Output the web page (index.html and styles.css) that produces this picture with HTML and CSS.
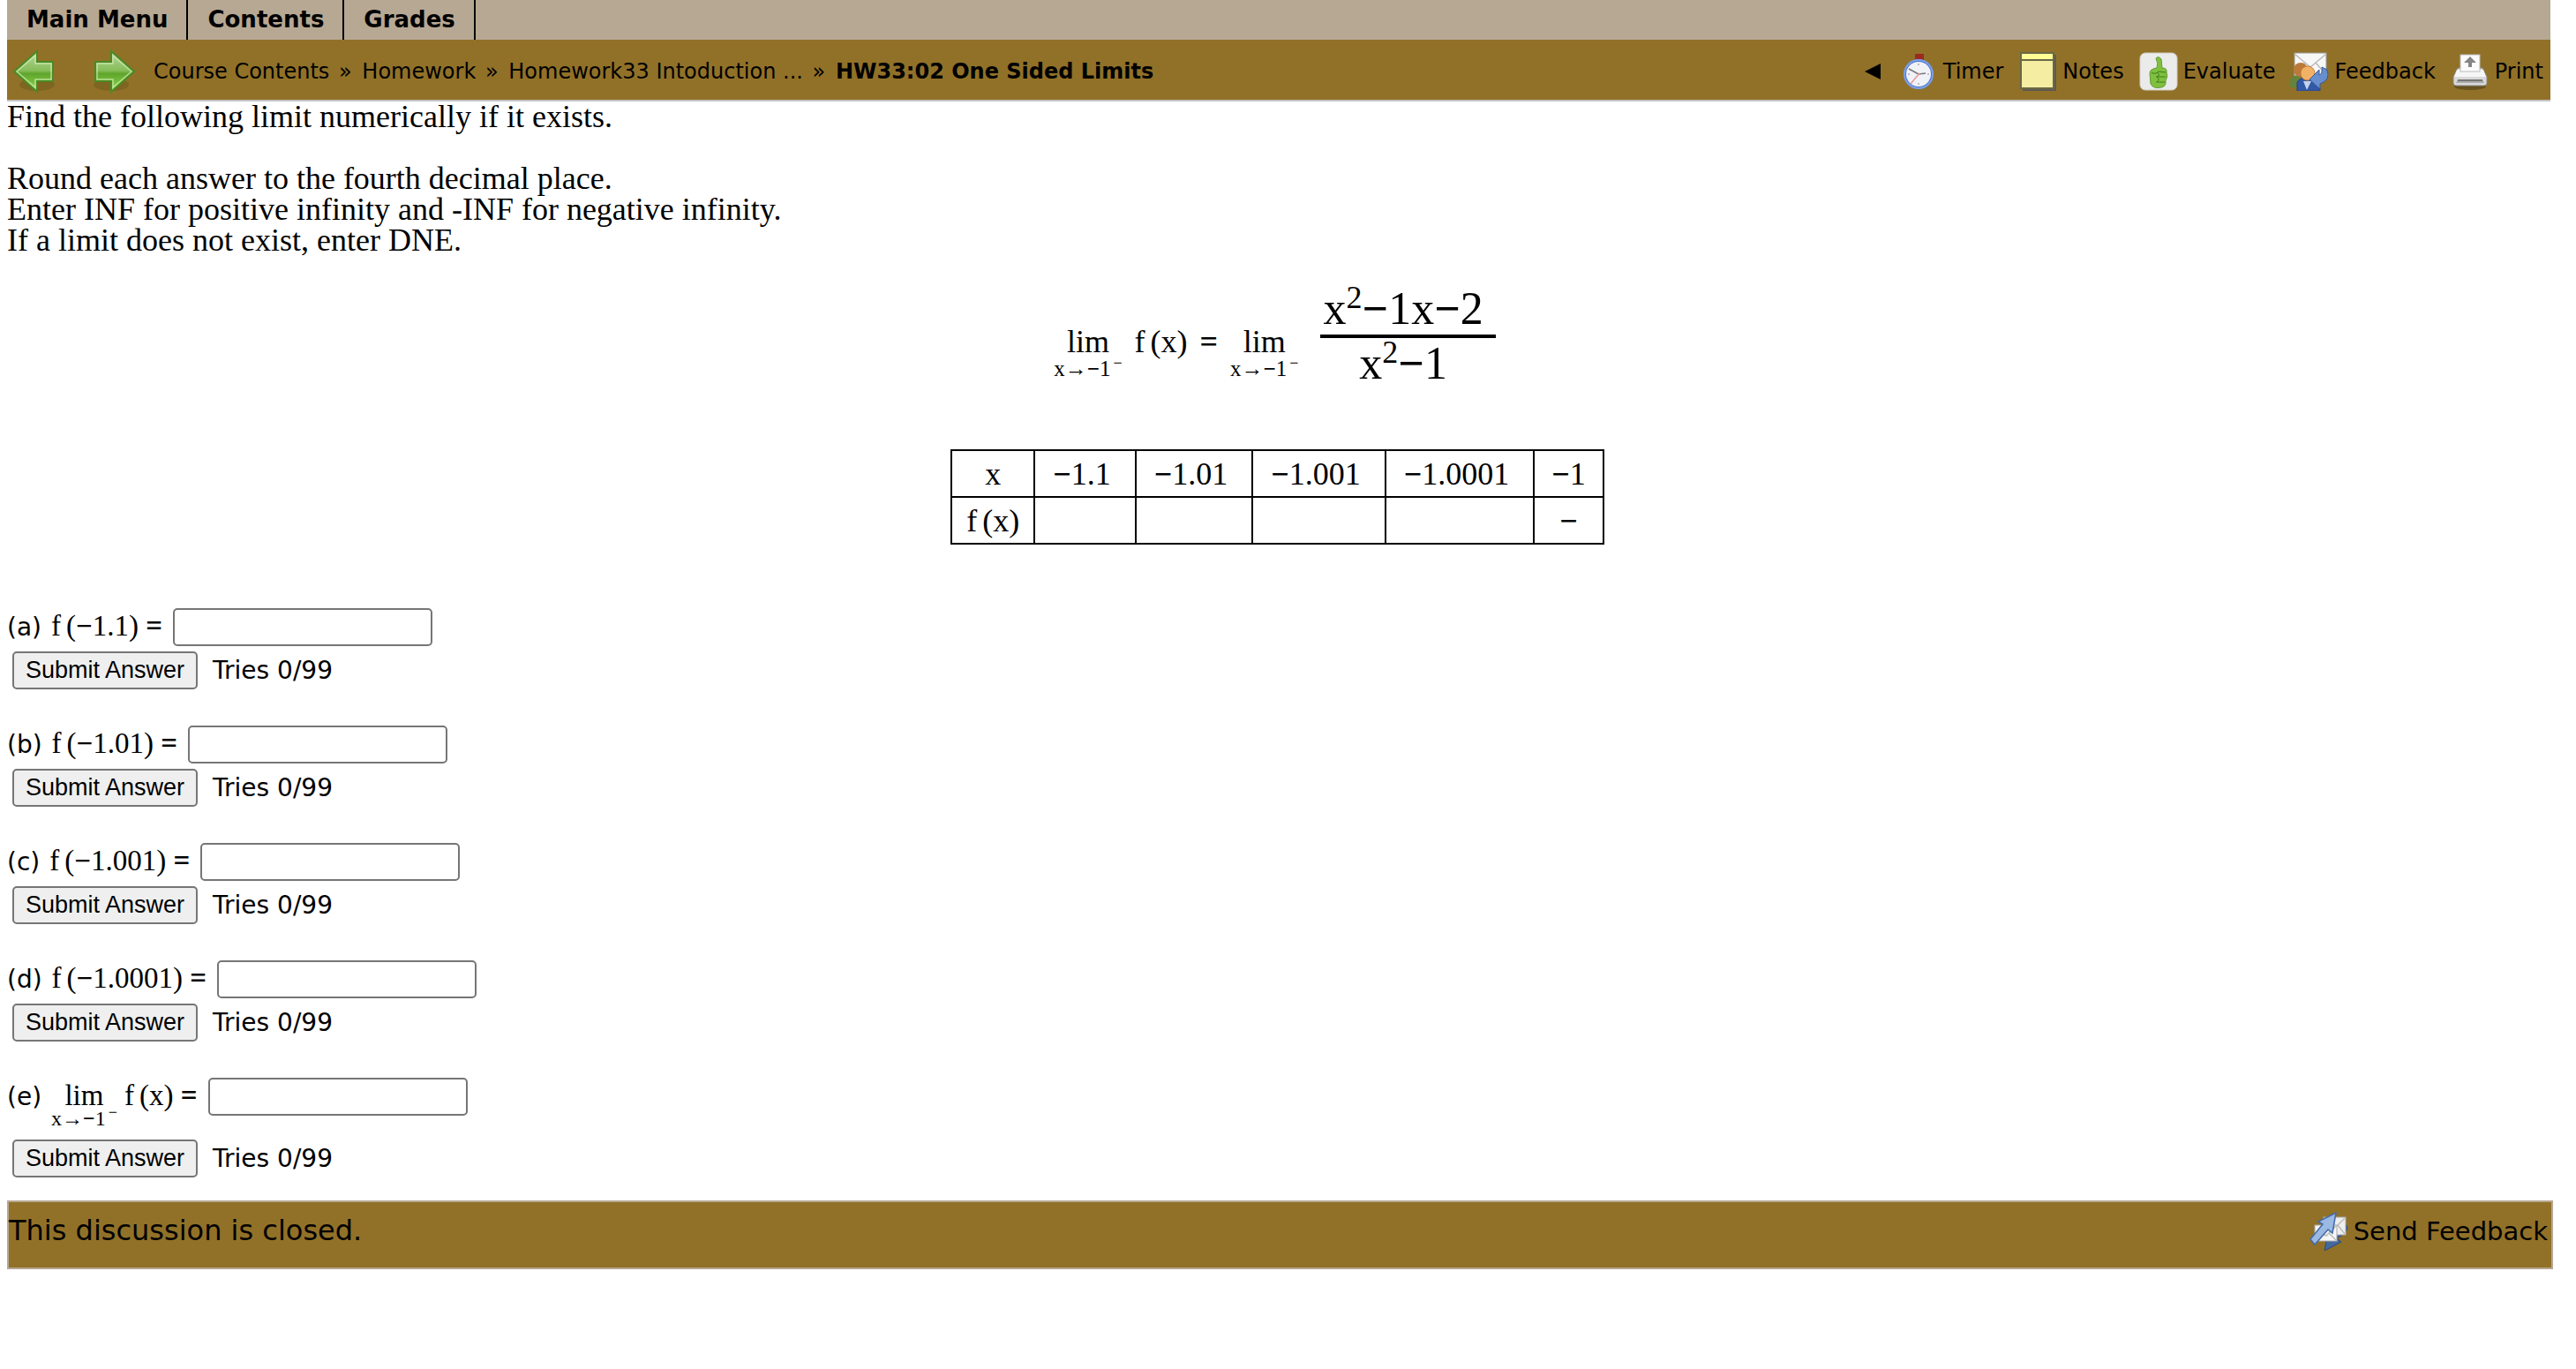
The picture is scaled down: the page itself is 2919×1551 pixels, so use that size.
FILE: index.html
```html
<!DOCTYPE html>
<html lang="en">
  <head>
    <meta charset="UTF-8">
    <title>HW33:02 One Sided Limits</title>
    <link rel="stylesheet" href="styles.css">
  </head>
  <body>
    <header class="header">
      <nav class="main-menu">
        <a href="#">Main Menu</a>
        <a href="#">Contents</a>
        <a href="#">Grades</a>
      </nav>
      <div class="toolbar">
        <div class="arrows">
          <a href="#" aria-label="Previous">
            <svg width="48" height="64" viewBox="0 1 48 64">
              <defs>
                <linearGradient id="green" x1="0" y1="0" x2="0" y2="1">
                  <stop offset="0" stop-color="#b9d79c"/>
                  <stop offset="0.48" stop-color="#86bd58"/>
                  <stop offset="0.55" stop-color="#5fa52c"/>
                  <stop offset="1" stop-color="#93dc4c"/>
                </linearGradient>
              </defs>
              <ellipse cx="28" cy="48" rx="20" ry="7" fill="#6b5a1c" opacity="0.5"/>
              <path d="M2 33 L28 10 V22 H46 V44 H28 V56 Z" fill="url(#green)" stroke="#4a8a22" stroke-width="2"/>
              <path d="M5 33 L26 15 V24 H44 V42 H26 V51 Z" fill="none" stroke="#d4ecbd" stroke-width="1.5" opacity="0.7"/>
            </svg>
          </a>
          <a href="#" aria-label="Next">
            <svg width="48" height="64" viewBox="0 1 48 64">
              <ellipse cx="20" cy="48" rx="20" ry="7" fill="#6b5a1c" opacity="0.5"/>
              <path d="M46 33 L20 10 V22 H2 V44 H20 V56 Z" fill="url(#green)" stroke="#4a8a22" stroke-width="2"/>
              <path d="M43 33 L22 15 V24 H4 V42 H22 V51 Z" fill="none" stroke="#d4ecbd" stroke-width="1.5" opacity="0.7"/>
            </svg>
          </a>
        </div>
        <nav class="breadcrumbs">
          <a href="#">Course Contents</a> <span>»</span> <a href="#">Homework</a> <span>»</span> <a href="#">Homework33 Intoduction ...</a> <span>»</span> <b>HW33:02 One Sided Limits</b>
        </nav>
        <div class="functions">
          <button class="collapse" aria-label="Collapse">
            <svg width="18" height="18" viewBox="0 0 18 18"><path d="M0 9 L18 0 V18 Z"/></svg>
          </button>
          <a href="#">
            <svg width="44" height="44" viewBox="0 0 44 44">
              <rect x="18" y="2" width="10" height="7" fill="#9c2a22"/>
              <circle cx="22" cy="25" r="17" fill="#4a74cc"/>
              <circle cx="22" cy="25" r="16" fill="none" stroke="#7da0e4" stroke-width="2"/>
              <circle cx="22" cy="25" r="14" fill="#f1f2f8"/>
              <path d="M11 19 L22 25 L30 24" fill="none" stroke="#777" stroke-width="1.5"/>
              <path d="M23 24 L13 36" stroke="#e59a94" stroke-width="1.5"/>
              <path d="M22 13 v2 M22 35 v2 M32 25 h2 M10 25 h2" stroke="#aaa" stroke-width="1.5"/>
            </svg>
            Timer
          </a>
          <a href="#">
            <svg width="44" height="44" viewBox="0 0 44 44">
              <rect x="5" y="3" width="38" height="41" fill="#5d5b50"/>
              <rect x="3" y="1" width="37" height="40" fill="#f4eda2" stroke="#6a6846" stroke-width="2"/>
              <rect x="4" y="2" width="35" height="6" fill="#ffff96"/>
              <path d="M3 9 H40" stroke="#6a6846" stroke-width="2"/>
            </svg>
            Notes
          </a>
          <a href="#">
            <svg width="44" height="44" viewBox="0 0 44 44">
              <rect x="1" y="1" width="42" height="42" rx="6" fill="#ebebeb" stroke="#d2cdc2"/>
              <path d="M19 7 Q22 4 25 8 L26 18 Q32 18 31 23 Q33 28 30 32 Q31 39 25 40 Q16 42 13 36 L12 24 Q12 19 20 18 Q22 13 19 7 Z" fill="#7fc13e" stroke="#679938"/>
              <path d="M14 23 Q18 26 22 22 L30 23 M19 28 H30 M19 34 H29 M20 23 Q25 26 20 28 Q24 31 20 34" fill="none" stroke="#44781f" stroke-width="1"/>
            </svg>
            Evaluate
          </a>
          <a href="#">
            <svg width="44" height="44" viewBox="0 0 44 44">
              <rect x="5" y="1" width="36" height="26" fill="#f7f7f7" stroke="#999"/>
              <path d="M5 2 L23 17 L41 2 M5 26 L17 12 M41 26 L29 12" fill="none" stroke="#bbb" stroke-width="1.5"/>
              <path d="M0 40 V31 Q3 25 12 27 V40 Z" fill="#66833a"/>
              <circle cx="12" cy="20" r="8" fill="#bb7a3a"/>
              <path d="M8 44 V34 Q12 28 20 30 L33 36 L34 44 Z" fill="#3159a8" stroke="#2c3c83"/>
              <path d="M15 33 L19 43 L24 33 Z" fill="#c3d2ec"/>
              <circle cx="20" cy="24" r="8" fill="#f2b266" stroke="#c88138"/>
              <path d="M22 31 L33 20 V26 Q37 25 36 17 L42 20 Q46 32 34 36 V42 Z" fill="#678fd0" stroke="#35589a"/>
            </svg>
            Feedback
          </a>
          <a href="#">
            <svg width="44" height="44" viewBox="0 0 44 44">
              <ellipse cx="22" cy="39" rx="18" ry="4" fill="#4d3d16" opacity="0.6"/>
              <path d="M8 18 H36 L41 28 V35 Q41 38 38 38 H6 Q3 38 3 35 V28 Z" fill="#d9d9d9" stroke="#888"/>
              <path d="M7 20 H37 L40 28 H4 Z" fill="#f6f6f6"/>
              <path d="M8 31 H36 L38 35 H6 Z" fill="#aaa"/>
              <path d="M8 32 H36" stroke="#777" stroke-width="2"/>
              <rect x="11" y="3" width="22" height="19" fill="#fbfbfb" stroke="#bbb"/>
              <path d="M22 5 L29 12 H24 V17 H20 V12 H15 Z" fill="#858585"/>
            </svg>
            Print
          </a>
        </div>
      </div>
    </header>

    <main>
      <p class="problem">
        Find the following limit numerically if it exists.<br>
        <br>
        Round each answer to the fourth decimal place.<br>
        Enter INF for positive infinity and -INF for negative infinity.<br>
        If a limit does not exist, enter DNE.
      </p>

      <div class="equation">
        <div class="side">
          <span class="lim">lim<small>x→<b>−</b>1<sup>−</sup></small></span>
          <span><i>f</i>(x)</span>
          <b>=</b>
          <span class="lim">lim<small>x→<b>−</b>1<sup>−</sup></small></span>
        </div>
        <div class="fraction">
          <div class="numerator">x<sup>2</sup><b>−</b>1x<b>−</b>2</div>
          <div class="denominator">x<sup>2</sup><b>−</b>1</div>
        </div>
      </div>

      <table class="values">
        <tr>
          <th>x</th>
          <td><b>−</b>1.1</td>
          <td><b>−</b>1.01</td>
          <td><b>−</b>1.001</td>
          <td><b>−</b>1.0001</td>
          <td><b>−</b>1</td>
        </tr>
        <tr>
          <th><i>f</i>(x)</th>
          <td></td>
          <td></td>
          <td></td>
          <td></td>
          <td><b>−</b></td>
        </tr>
      </table>

      <form class="question">
        <div class="answer">
          <label for="a">(a) <span class="math"><i>f</i>(<b>−</b>1.1) <b>=</b></span></label>
          <input type="text" id="a">
        </div>
        <div class="submit">
          <button type="button">Submit Answer</button>
          <span>Tries 0/99</span>
        </div>
      </form>

      <form class="question">
        <div class="answer">
          <label for="b">(b) <span class="math"><i>f</i>(<b>−</b>1.01) <b>=</b></span></label>
          <input type="text" id="b">
        </div>
        <div class="submit">
          <button type="button">Submit Answer</button>
          <span>Tries 0/99</span>
        </div>
      </form>

      <form class="question">
        <div class="answer">
          <label for="c">(c) <span class="math"><i>f</i>(<b>−</b>1.001) <b>=</b></span></label>
          <input type="text" id="c">
        </div>
        <div class="submit">
          <button type="button">Submit Answer</button>
          <span>Tries 0/99</span>
        </div>
      </form>

      <form class="question">
        <div class="answer">
          <label for="d">(d) <span class="math"><i>f</i>(<b>−</b>1.0001) <b>=</b></span></label>
          <input type="text" id="d">
        </div>
        <div class="submit">
          <button type="button">Submit Answer</button>
          <span>Tries 0/99</span>
        </div>
      </form>

      <form class="question limit">
        <div class="answer">
          <label for="e">(e) <span class="math"><span class="lim">lim<small>x→<b>−</b>1<sup>−</sup></small></span> <i>f</i>(x) <b>=</b></span></label>
          <input type="text" id="e">
        </div>
        <div class="submit">
          <button type="button">Submit Answer</button>
          <span>Tries 0/99</span>
        </div>
      </form>
    </main>

    <footer class="footer">
      <span>This discussion is closed.</span>
      <a href="#">
        <svg width="44" height="44" viewBox="0 0 44 44">
          <path d="M17 44 L20 28 L31 22 L42 15 Q45 21 36 27 L31 30 L36 34 Z" fill="#44699f" stroke="#2d4a7c"/>
          <rect x="16" y="6" width="25" height="20" fill="#efefef" stroke="#aaa"/>
          <path d="M17 7 L29 18 L40 7 M40 25 L32 15" fill="none" stroke="#bbb" stroke-width="1.5"/>
          <rect x="6" y="15" width="25" height="18" fill="#f6f6f6" stroke="#aaa"/>
          <path d="M7 32 L15 24 M30 32 L22 24 M15 25 L19 27 L30 16" fill="none" stroke="#bbb" stroke-width="1.5"/>
          <path d="M30 1 L26 24 L21 20 L6 37 L1 31 L15 14 L10 11 Z" fill="#9ab9e3" stroke="#446aa7" stroke-width="1.5"/>
        </svg>
        Send Feedback
      </a>
    </footer>
  </body>
</html>
```

FILE: styles.css
```css
body {
  margin: 0 26px 0 8px;
  font-family: Verdana, "DejaVu Sans", sans-serif;
  font-size: 28px;
  color: #000;
  background-color: #fff;
}

a {
  color: #000;
  text-decoration: none;
}

svg {
  display: block;
}

.header {
  margin-right: 3px;
}

.main-menu {
  display: flex;
  height: 45px;
  background-color: #b7a893;
  font-size: 26px;
}

.main-menu a {
  padding: 0 21px 0 22px;
  border-right: 2px solid #000;
  font-weight: bold;
  line-height: 44px;
}

.toolbar {
  display: flex;
  align-items: center;
  height: 64px;
  padding-top: 4px;
  border-bottom: 2px solid #c4c4c4;
  background-color: #917128;
  font-size: 24px;
}

.arrows {
  display: flex;
  gap: 44px;
  padding: 0 20px 0 6px;
}

.breadcrumbs {
  flex: 1;
}

.breadcrumbs span {
  padding: 0 4px 0 3px;
}

.functions {
  display: flex;
  align-items: center;
  gap: 17px;
  margin-right: 8px;
}

.functions a {
  display: flex;
  align-items: center;
  gap: 6px;
}

.collapse {
  margin-right: 4px;
  padding: 0;
  border: none;
  background: none;
}

main {
  padding-right: 6px;
}

.problem {
  margin: 0;
  font-family: "Liberation Serif", serif;
  font-size: 36px;
  line-height: 35px;
}

.equation,
.values,
.math {
  font-family: "Liberation Serif", serif;
  font-size: 36px;
}

i {
  margin-right: 6px;
  font-style: normal;
}

.equation {
  display: flex;
  justify-content: center;
  margin-top: 31px;
  padding-right: 6px;
}

.side {
  display: flex;
  align-items: baseline;
  gap: 14px;
  padding-top: 45px;
  margin-right: 24px;
}

.lim {
  display: inline-flex;
  flex-direction: column;
  align-items: center;
  line-height: 36px;
}

.lim small {
  font-size: 25px;
  line-height: 25px;
}

.lim sup {
  margin-left: 3px;
  font-size: 18px;
  line-height: 0;
}

.fraction {
  font-size: 52px;
  line-height: 58px;
  text-align: center;
}

.fraction sup {
  font-size: 36px;
  line-height: 0;
}

.numerator {
  padding: 0 14px 0 4px;
  border-bottom: 4px solid #000;
}

.denominator {
  padding-right: 10px;
}

.values {
  margin: 68px auto 72px;
  border-collapse: collapse;
}

.values th,
.values td {
  height: 51px;
  padding: 0 27px 0 20px;
  border: 2px solid #000;
  font-weight: normal;
  text-align: center;
}

.values th {
  padding: 0 16px;
}

.values td:last-child {
  padding: 0 19px;
}

.question {
  margin-bottom: 41px;
}

.answer {
  display: flex;
  align-items: flex-start;
  gap: 12px;
  margin-bottom: 6px;
}

.answer label {
  height: 43px;
  line-height: 40px;
}

.answer input {
  width: 294px;
  height: 43px;
  box-sizing: border-box;
  border: 2px solid #767676;
  border-radius: 5px;
  font-size: 24px;
}

.math {
  margin-left: 2px;
  font-size: 33px;
}

.math .lim {
  line-height: 30px;
}

.math .lim small {
  font-size: 24px;
  line-height: 22px;
}

.submit {
  display: flex;
  align-items: center;
  gap: 17px;
  padding-left: 6px;
}

.submit button {
  height: 43px;
  padding: 0 13px;
  border: 2px solid #767676;
  border-radius: 5px;
  background-color: #efefef;
  color: #000;
  font-family: "Liberation Sans", Arial, sans-serif;
  font-size: 27px;
}

.limit {
  margin-bottom: 26px;
}

.limit .answer {
  margin-bottom: 27px;
}

.footer {
  display: flex;
  justify-content: space-between;
  height: 74px;
  border: 2px solid #b7a893;
  background-color: #917128;
  font-size: 32px;
  line-height: 64px;
}

.footer a {
  display: flex;
  align-items: center;
  gap: 6px;
  height: 66px;
  padding-right: 4px;
  font-size: 29px;
}
```
